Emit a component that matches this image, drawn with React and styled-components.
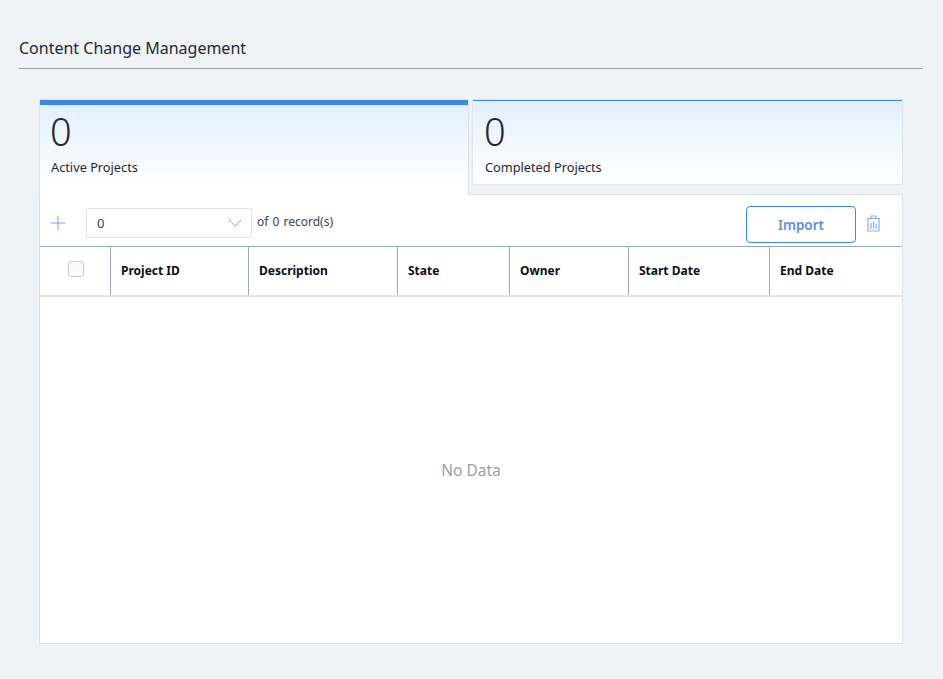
import React from "react";
import styled, { createGlobalStyle } from "styled-components";
import { Plus, ChevronDown } from "lucide-react";

const GlobalStyle = createGlobalStyle`
  html, body {
    margin: 0;
    padding: 0;
    background: #f0f3f6;
    font-family: "Noto Sans", "Open Sans", sans-serif;
    color: #1f2933;
  }
  * {
    box-sizing: border-box;
  }
`;

const Page = styled.div`
  width: 943px;
  height: 679px;
  padding: 0 20px 0 19px;
  overflow: hidden;
`;

const Header = styled.header`
  height: 69px;
  padding-top: 37px;
  border-bottom: 1px solid #9aa0a6;
`;

const Title = styled.h1`
  margin: 0;
  font-size: 16px;
  line-height: 22px;
  font-weight: 400;
  color: #1f2933;
`;

const Content = styled.div`
  margin: 30px 20px 0 20px;
`;

const Cards = styled.div`
  display: flex;
  align-items: flex-start;
  gap: 5px;
  padding: 1px 1px 0;
`;

const Card = styled.div`
  position: relative;
  z-index: ${(p) => (p.$active ? 1 : 0)};
  flex: ${(p) => (p.$active ? "0 0 428px" : "1")};
  height: ${(p) => (p.$active ? "95px" : "84px")};
  padding: ${(p) => (p.$active ? "7px 10px 0" : "11px 11px 0")};
  border-top: ${(p) => (p.$active ? "5px" : "1px")} solid #3f86ea;
  background: linear-gradient(#e4f0ff, #ffffff ${(p) => (p.$active ? "90%" : "100%")});
  box-shadow: ${(p) =>
    p.$active
      ? "-1px 0 #dfe2e5, 1px 0 #dfe2e5, 0 -1px #dfe2e5"
      : "0 0 2px rgba(0, 0, 0, 0.16)"};
`;

const Count = styled.div`
  font-size: 38px;
  line-height: 38px;
  font-weight: 300;
  color: #1f2933;
`;

const CardLabel = styled.div`
  margin: 8px 0 0 1px;
  font-size: 12.75px;
  line-height: 18px;
  color: #1f2933;
`;

const Panel = styled.section`
  height: 450px;
  margin-top: -1px;
  background: #fff;
  border: 1px solid #dddfe1;
`;

const Toolbar = styled.div`
  display: flex;
  align-items: center;
  height: 51px;
  padding: 5px 21px 0 6px;
`;

const AddButton = styled.button`
  display: flex;
  padding: 0;
  border: 0;
  background: none;
  color: #7f9fe8;
`;

const Select = styled.div`
  display: flex;
  align-items: center;
  justify-content: space-between;
  width: 166px;
  height: 30px;
  margin-left: 16px;
  padding: 0 4px 0 10px;
  border: 1px solid #dfe2e5;
  border-radius: 3px;
  font-size: 13px;
  color: #3a4550;

  svg {
    color: #8ea6e8;
  }
`;

const Records = styled.span`
  margin-left: 5px;
  font-size: 12px;
  word-spacing: 1px;
  color: #3a4550;
  position: relative;
  top: -2px;
`;

const Actions = styled.div`
  display: flex;
  align-items: center;
  gap: 10px;
  margin-left: auto;
`;

const ImportButton = styled.button`
  width: 110px;
  height: 37px;
  margin-top: 3px;
  padding: 0;
  border: 1px solid #3f86ea;
  border-radius: 4px;
  background: #fff;
  font: 600 13.5px "Noto Sans", sans-serif;
  color: #6488e8;
`;

const TrashIcon = styled.svg`
  width: 15px;
  height: 17px;
  fill: none;
  stroke: #8fadee;
  stroke-width: 1.2;
`;

const Table = styled.div`
  display: grid;
  grid-template-columns: 70px 138px 149px 112px 119px 141px 1fr;
  height: 51px;
  border-top: 1px solid #98a8b3;
  border-bottom: 2px solid #e2e4e6;
`;

const HeadCell = styled.div`
  display: flex;
  align-items: center;
  justify-content: ${(p) => (p.$center ? "center" : "flex-start")};
  padding: ${(p) => (p.$center ? "0 0 4px 2px" : "0 10px 2px")};
  border-left: ${(p) => (p.$first ? "0" : "1px solid #98a8b3")};
  font-size: 12px;
  font-weight: 700;
  color: #0c0f12;
`;

const Checkbox = styled.span`
  display: block;
  width: 16px;
  height: 16px;
  border: 1px solid #c9cdd1;
  border-radius: 3px;
  background: #fafafa;
`;

const Empty = styled.div`
  display: flex;
  align-items: center;
  justify-content: center;
  height: 345px;
  font-size: 15.5px;
  color: #98a0a8;
`;

const columns = ["Project ID", "Description", "State", "Owner", "Start Date", "End Date"];

export default function App() {
  return (
    <Page>
      <GlobalStyle />
      <Header>
        <Title>Content Change Management</Title>
      </Header>
      <Content>
        <Cards>
          <Card $active>
            <Count>0</Count>
            <CardLabel>Active Projects</CardLabel>
          </Card>
          <Card>
            <Count>0</Count>
            <CardLabel>Completed Projects</CardLabel>
          </Card>
        </Cards>
        <Panel>
          <Toolbar>
            <AddButton aria-label="Add">
              <Plus size={24} strokeWidth={1} />
            </AddButton>
            <Select>
              0
              <ChevronDown size={24} strokeWidth={1} />
            </Select>
            <Records>of 0 record(s)</Records>
            <Actions>
              <ImportButton>Import</ImportButton>
              <TrashIcon viewBox="0 0 15 17">
                <path d="M1 3.5h13M2 3.5v12.5h11V3.5M5 3.5V1h5v2.5" />
                <path d="M5 8v6M7.5 6.5V14M10 9v5" />
              </TrashIcon>
            </Actions>
          </Toolbar>
          <Table>
            <HeadCell $first $center>
              <Checkbox />
            </HeadCell>
            {columns.map((name) => (
              <HeadCell key={name}>{name}</HeadCell>
            ))}
          </Table>
          <Empty>No Data</Empty>
        </Panel>
      </Content>
    </Page>
  );
}
